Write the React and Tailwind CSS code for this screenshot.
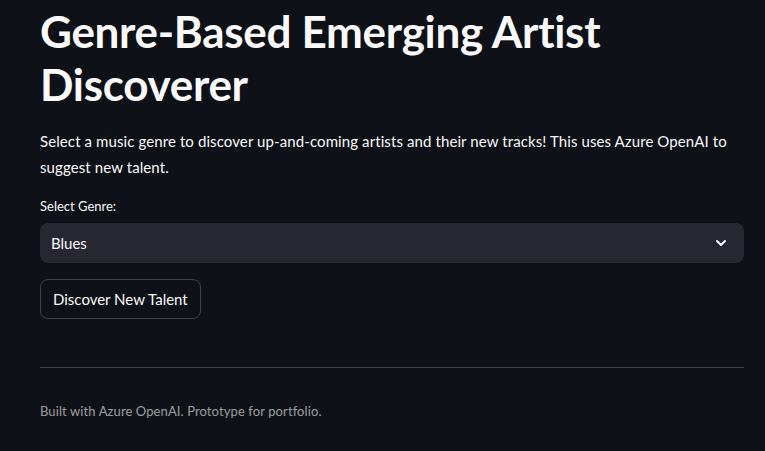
import React from "react";
import { ChevronDown } from "lucide-react";

export default function App() {
  return (
    <div className="min-h-[451px] w-full bg-[#0e1117] text-[#fafafa]" style={{ fontFamily: "Lato, 'Noto Sans', sans-serif" }}>
      <div className="w-[704px] ml-10 pt-[5px]">
        <h1 className="text-[44px] font-bold leading-[53px] tracking-[-0.3px]">
          Genre-Based Emerging Artist Discoverer
        </h1>

        <p className="mt-[18px] text-[15px] leading-[25.6px] tracking-[0.1px]">
          Select a music genre to discover up-and-coming artists and their new tracks! This uses Azure OpenAI to suggest new talent.
        </p>

        <div className="mt-[16px]">
          <label className="block text-[13px] leading-[20px] mt-[1px] mb-[7px]">Select Genre:</label>
          <div className="flex h-10 items-center justify-between rounded-lg bg-[#262730] pl-[11px] pr-[15px] text-[15px]">
            <span>Blues</span>
            <ChevronDown className="h-4 w-4" strokeWidth={3} />
          </div>
        </div>

        <button className="mt-4 h-10 rounded-lg border border-[rgba(250,250,250,0.2)] px-3 text-[15px]">
          Discover New Talent
        </button>

        <hr className="mt-12 border-t border-[rgba(250,250,250,0.2)]" />

        <p className="mt-[34px] text-[13px] text-[rgba(250,250,250,0.6)] tracking-[0.1px]">
          Built with Azure OpenAI. Prototype for portfolio.
        </p>
      </div>
    </div>
  );
}
